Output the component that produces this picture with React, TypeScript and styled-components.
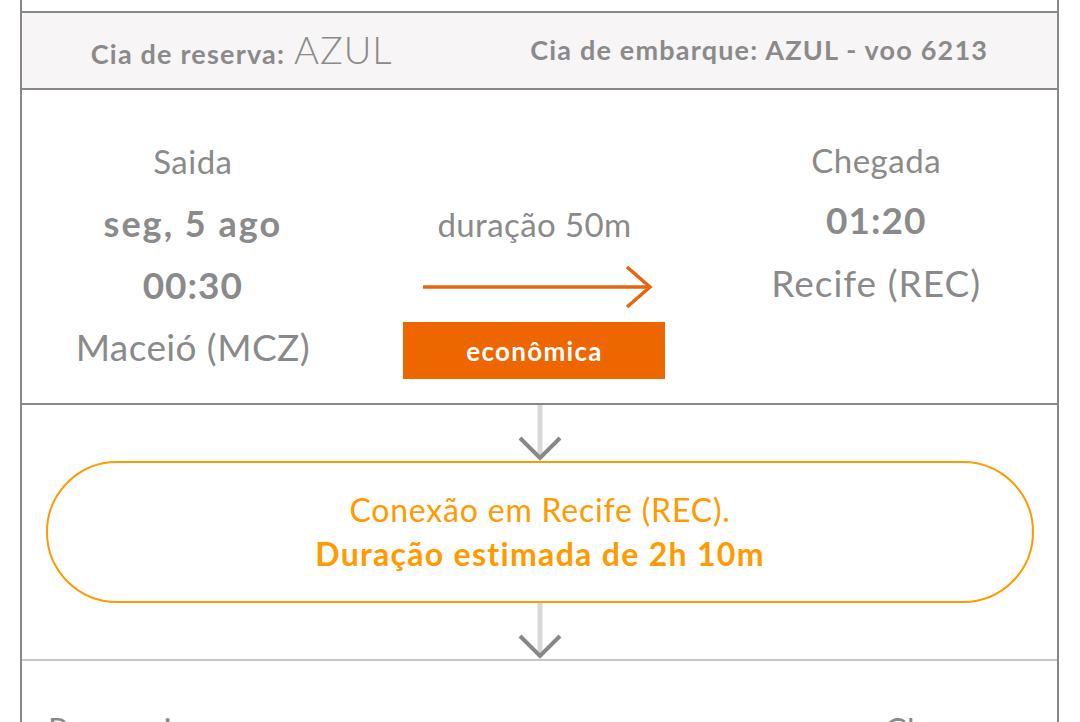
import React from "react";
import styled, { createGlobalStyle } from "styled-components";

const Global = createGlobalStyle`
  html, body { margin: 0; padding: 0; background: #ffffff; }
  body { font-family: "Lato", "Open Sans", sans-serif; color: #8a8a8a; }
  * { box-sizing: border-box; }
`;

const Page = styled.div`
  padding: 0 21px 0 20px;
`;

const Card = styled.div`
  border-left: 2px solid #888888;
  border-right: 2px solid #888888;
  padding-top: 11px;
`;

const Header = styled.div`
  height: 79px;
  padding-bottom: 3px;
  background: #f7f5f6;
  border-top: 2px solid #888888;
  border-bottom: 2px solid #888888;
  display: flex;
  justify-content: space-around;
  align-items: center;
`;

const HeaderItem = styled.div`
  font-size: 27px;
  font-weight: 700;
  letter-spacing: 1.2px;
  color: #8a8a8a;
  display: flex;
  align-items: baseline;
  gap: 9px;
  white-space: pre;
`;

const Carrier = styled.span`
  font-size: 38px;
  font-weight: 300;
  letter-spacing: 1px;
`;

const Flight = styled.div`
  height: 315px;
  border-bottom: 2px solid #888888;
  padding: 40px 10px 0 0;
  display: grid;
  grid-template-columns: repeat(3, 1fr);
`;

const Column = styled.div<{ $offset?: number }>`
  display: flex;
  flex-direction: column;
  align-items: center;
  padding-top: ${(p) => p.$offset ?? 0}px;
`;

const Line = styled.div<{ $size: number; $bold?: boolean; $lh?: number; $ls?: number }>`
  font-size: ${(p) => p.$size}px;
  font-weight: ${(p) => (p.$bold ? 700 : 400)};
  line-height: ${(p) => p.$lh ?? 62}px;
  letter-spacing: ${(p) => p.$ls ?? 0.5}px;
  color: #8a8a8a;
  white-space: nowrap;
`;

const ArrowSvg = styled.svg`
  display: block;
  margin-top: 10px;
  margin-left: 6px;
`;

const Badge = styled.div`
  margin-top: 13px;
  width: 262px;
  height: 57px;
  background: #ee6600;
  color: #ffffff;
  font-size: 26px;
  font-weight: 700;
  letter-spacing: 1.3px;
  display: flex;
  align-items: center;
  justify-content: center;
`;

const Connection = styled.div`
  border-bottom: 2px solid #c8c8c8;
  display: flex;
  flex-direction: column;
  align-items: center;
`;

const ConnectorSvg = styled.svg`
  display: block;
`;

const Pill = styled.div`
  align-self: stretch;
  margin: 0 23px 0 24px;
  height: 142px;
  border: 2px solid #ff9a00;
  border-radius: 71px;
  display: flex;
  flex-direction: column;
  align-items: center;
  justify-content: center;
  color: #ff9a00;
`;

const PillLine = styled.div<{ $bold?: boolean }>`
  font-size: 32px;
  line-height: 44px;
  letter-spacing: ${(p) => (p.$bold ? 1.3 : 0.8)}px;
  font-weight: ${(p) => (p.$bold ? 700 : 400)};
`;

const NextRow = styled.div`
  display: grid;
  grid-template-columns: 1fr 172px;
  padding: 50px 0 0 26px;
  height: 70px;
  overflow: hidden;
`;

const NextLabel = styled.div`
  font-size: 32px;
  line-height: 38px;
  letter-spacing: 0.6px;
  color: #8a8a8a;
`;

const Connector = () => (
  <ConnectorSvg width="44" height="56" viewBox="0 0 44 56">
    <line x1="22" y1="0" x2="22" y2="54" stroke="#d8d8d8" strokeWidth="5" />
    <polyline points="2,33 22,53 42,33" fill="none" stroke="#888888" strokeWidth="4" />
  </ConnectorSvg>
);

export default function App() {
  return (
    <>
      <Global />
      <Page>
        <Card>
          <Header>
            <HeaderItem>
              Cia de reserva:<Carrier>AZUL</Carrier>
            </HeaderItem>
            <HeaderItem>Cia de embarque: AZUL - voo 6213</HeaderItem>
          </Header>
          <Flight>
            <Column>
              <Line $size={33}>Saida</Line>
              <Line $size={36} $bold $ls={2}>seg, 5 ago</Line>
              <Line $size={37} $bold $ls={1}>00:30</Line>
              <Line $size={37} $ls={0.4}>Maceió (MCZ)</Line>
            </Column>
            <Column $offset={63}>
              <Line $size={33} $ls={0.4}>duração 50m</Line>
              <ArrowSvg width="232" height="44" viewBox="0 0 232 44">
                <line x1="2" y1="22" x2="229" y2="22" stroke="#e8650f" strokeWidth="3.5" />
                <polyline points="206,2 229,22 206,42" fill="none" stroke="#e8650f" strokeWidth="3.5" />
              </ArrowSvg>
              <Badge>econômica</Badge>
            </Column>
            <Column>
              <Line $size={33} $lh={60}>Chegada</Line>
              <Line $size={37} $bold $lh={60} $ls={1}>01:20</Line>
              <Line $size={37} $lh={66} $ls={1}>Recife (REC)</Line>
            </Column>
          </Flight>
          <Connection>
            <Connector />
            <Pill>
              <PillLine>Conexão em Recife (REC).</PillLine>
              <PillLine $bold>Duração estimada de 2h 10m</PillLine>
            </Pill>
            <Connector />
          </Connection>
          <NextRow>
            <NextLabel>Passageiro</NextLabel>
            <NextLabel>Classe</NextLabel>
          </NextRow>
        </Card>
      </Page>
    </>
  );
}
